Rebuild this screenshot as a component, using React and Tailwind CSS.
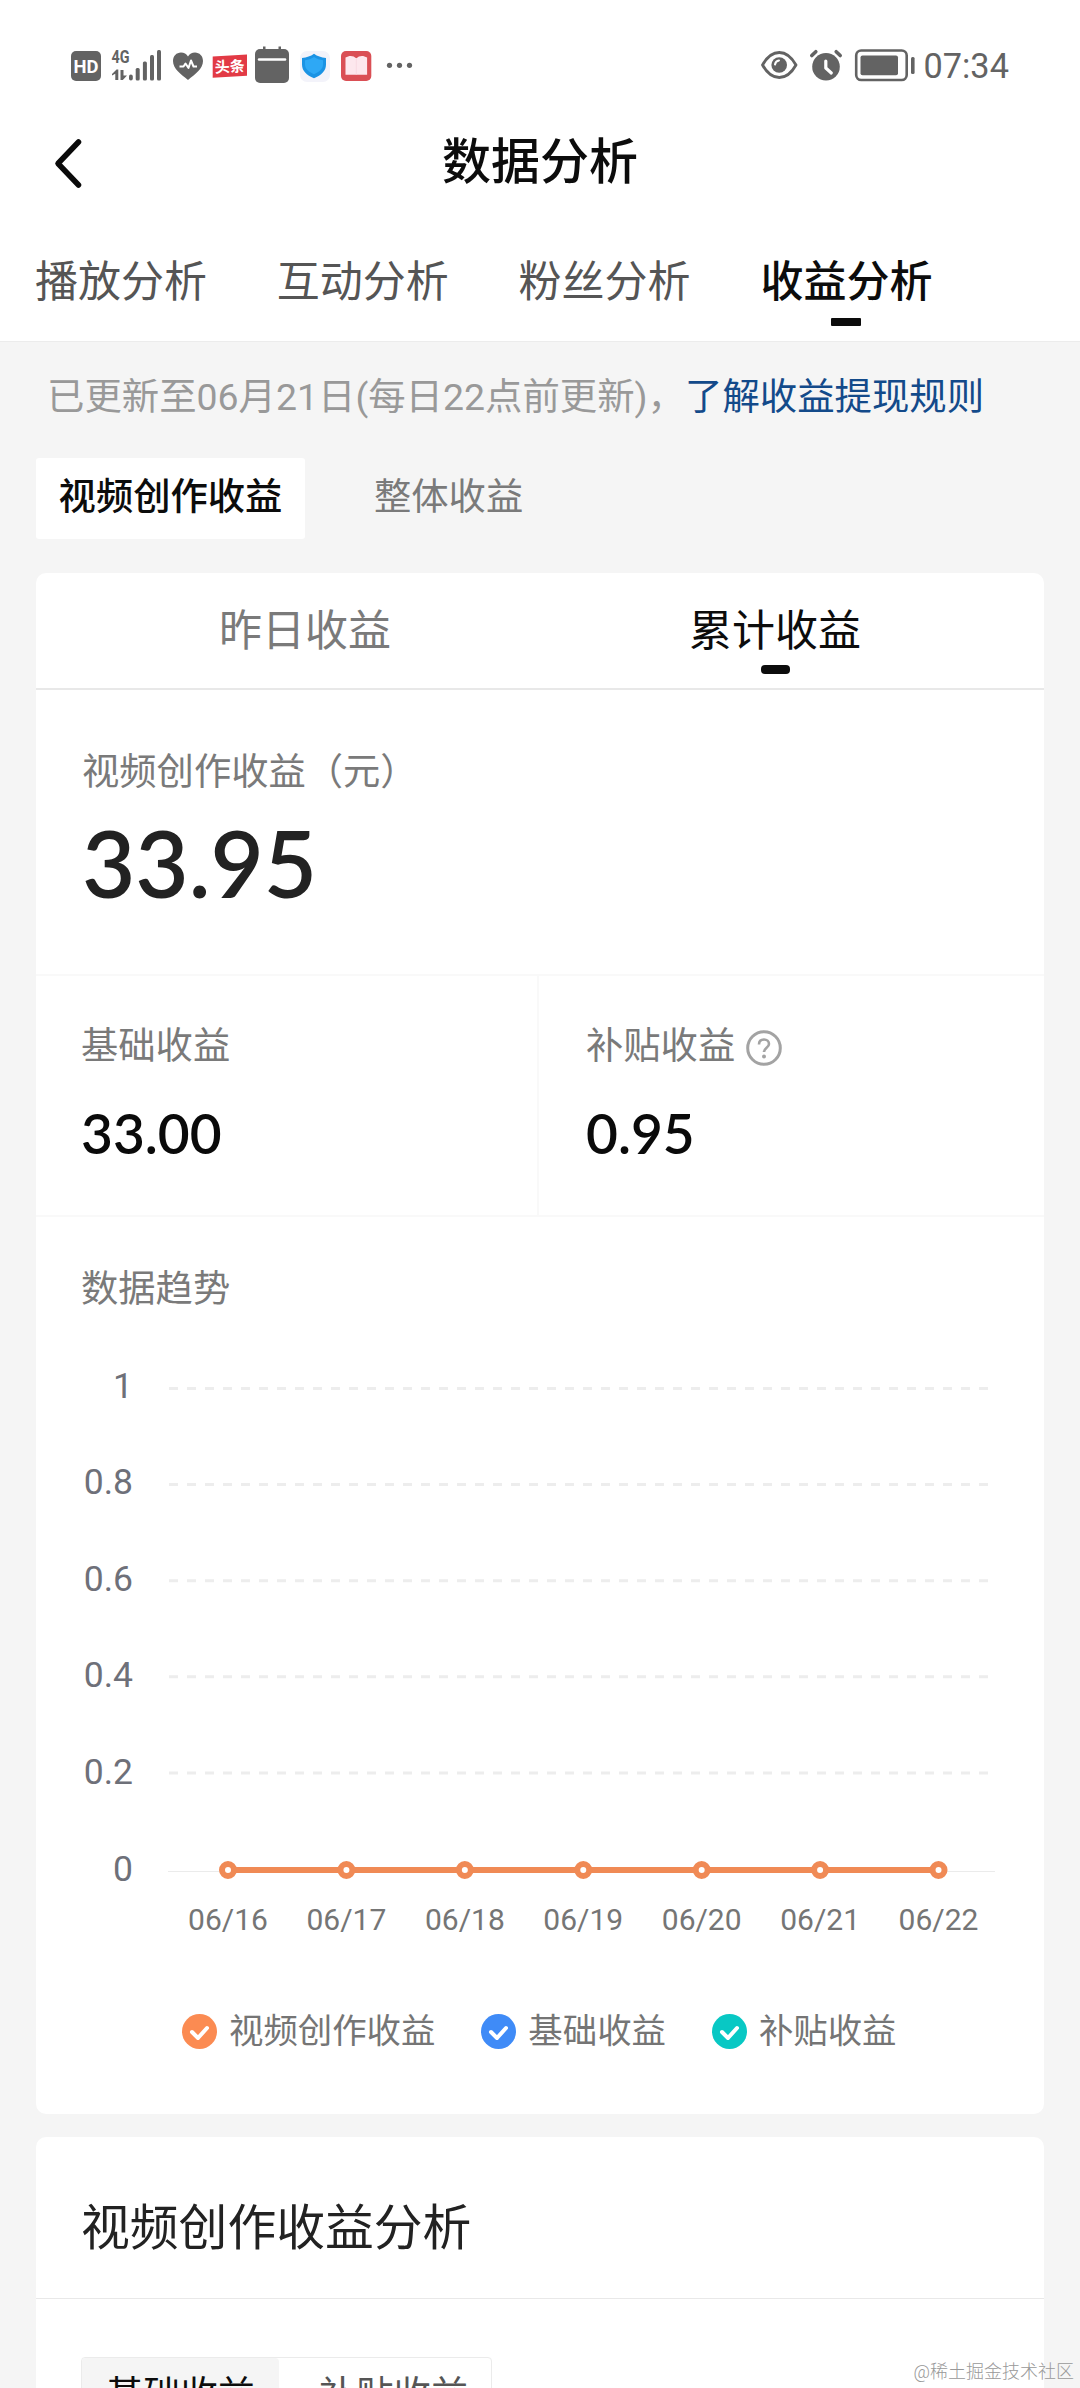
import React from "react";

const tabs = ["播放分析", "互动分析", "粉丝分析", "收益分析"];
const yLabels = ["1", "0.8", "0.6", "0.4", "0.2", "0"];
const dates = ["06/16", "06/17", "06/18", "06/19", "06/20", "06/21", "06/22"];
const legend = [
  { name: "视频创作收益", color: "#fb8b52" },
  { name: "基础收益", color: "#3f8bf7" },
  { name: "补贴收益", color: "#08c8c4" },
];

const StatusBar = () => (
  <div className="h-[112px]">
    <svg width="1080" height="112" viewBox="0 0 1080 112">
      <g fill="#636363">
        <rect x="71" y="51" width="30" height="30" rx="5" />
        <text x="86" y="73" textAnchor="middle" fontSize="19" fontWeight="700" fontFamily="Roboto" fill="#fff" textLength="25" lengthAdjust="spacingAndGlyphs">HD</text>
        <text x="111.500" y="63" fontSize="19" fontWeight="700" fontFamily="Roboto" textLength="18" lengthAdjust="spacingAndGlyphs">4G</text>
        <path d="M112 74l4.500-4.500h1.800V80h-3v-6.300L112 75.500zM120.500 70h3v5.500h3.500l-4.200 4.500h-2.300z" />
        <rect x="129" y="74.500" width="3.800" height="6" rx="1.900" />
        <rect x="135.700" y="68" width="4" height="12.500" rx="1.500" />
        <rect x="142.900" y="61.500" width="4" height="19" rx="1.500" />
        <rect x="150" y="55" width="4" height="25.500" rx="1.500" />
        <rect x="157" y="50" width="4" height="30.500" rx="1.500" />
        <path d="M188 80C181 74 173 69 173 61c0-5 3.500-8.500 8-8.500 3 0 5.500 1.500 7 4 1.500-2.500 4-4 7-4 4.500 0 8 3.500 8 8.500 0 8-8 13-15 19z" />
        <path d="M179.500 66.500h4l2-3 3 4.500 2.500-7.500 2.500 6h3.500" fill="none" stroke="#fff" strokeWidth="2" strokeLinejoin="round" />
      </g>
      <path d="M212.700 56.500l34.300-2v21.300l-34.300 2z" fill="#e23a45" />
      <text x="229.800" y="72" textAnchor="middle" fontSize="15" fontWeight="700" fontFamily="Noto Sans CJK SC" fill="#fff" transform="rotate(-3 229.800 66)">头条</text>
      <g fill="#636363">
        <rect x="255" y="49" width="34" height="34" rx="5" />
        <rect x="263" y="46.500" width="2.500" height="5" />
        <rect x="278.500" y="46.500" width="2.500" height="5" />
      </g>
      <rect x="257.800" y="58.300" width="28.500" height="2.500" rx="1.200" fill="#fff" />
      <rect x="300" y="51" width="30" height="31" rx="7" fill="#f3f3fa" />
      <path d="M314 53.700c3.500 2.500 7 3.700 12 4.300v6.500c0 6.500-4.500 10.500-12 13.800-7.500-3.300-12-7.300-12-13.800V58c5-.600 8.500-1.800 12-4.300z" fill="#1b93e4" />
      <path d="M314 57c3 2 5.500 2.800 9 3.200v4c0 4.800-3.500 7.500-9 10-5.500-2.500-9-5.200-9-10v-4c3.500-.400 6-1.200 9-3.200z" fill="#2ea8f5" />
      <rect x="341" y="51" width="30.300" height="30" rx="5" fill="#da4f55" />
      <path d="M345.500 57.500c4-2.500 8-2 10.800.800 2.800-2.800 6.800-3.300 10.800-.800v17.300h-21.600z" fill="#fde7ed" />
      <path d="M356.300 58.500v16" stroke="#f8dae1" strokeWidth="1" />
      <g fill="#636363">
        <circle cx="389.500" cy="65.300" r="2.600" />
        <circle cx="399.500" cy="65.300" r="2.600" />
        <circle cx="409.500" cy="65.300" r="2.600" />
      </g>

      <path d="M762.500 65c4.500-8 10-12.500 16.800-12.500S791.500 57 796 65c-4.500 8-10 12.500-16.700 12.500S767 73 762.500 65z" fill="none" stroke="#636363" strokeWidth="2.800" strokeLinejoin="round" />
      <circle cx="779.200" cy="65" r="7.800" fill="#636363" />
      <path d="M775 64.500q.5-3.500 4-4" fill="none" stroke="#fff" strokeWidth="2" strokeLinecap="round" />
      <circle cx="826" cy="66.700" r="13.800" fill="#636363" />
      <path d="M811.800 55.500l4-3.800M840.200 55.500l-4-3.800" stroke="#636363" strokeWidth="3.600" strokeLinecap="round" />
      <path d="M825.800 61v7l5.500 5" fill="none" stroke="#fff" strokeWidth="3.200" strokeLinecap="round" strokeLinejoin="round" />
      <rect x="856.200" y="50.500" width="50.500" height="29.500" rx="5" fill="none" stroke="#636363" strokeWidth="2.600" />
      <rect x="860.500" y="55.500" width="37.500" height="19.800" rx="2" fill="#636363" />
      <rect x="911" y="57" width="3.600" height="17" rx="1.500" fill="#636363" />
      <text x="923.500" y="77.700" fontSize="34.300" fontFamily="Roboto" fill="#636363">07:34</text>
    </svg>
  </div>
);

const TrendChart = () => (
  <svg width="1008" height="640" viewBox="36 1320 1008 640" className="block">
    {yLabels.map((label, i) => (
      <g key={label}>
        <text x="133" y={1397.5 + i * 96.600} textAnchor="end" fontSize="35.500" fontFamily="Roboto" fill="#6e7079">
          {label}
        </text>
        {i < 5 && (
          <line x1="169" x2="988" y1={1388.5 + i * 96.100} y2={1388.5 + i * 96.100} stroke="#ededed" strokeWidth="3" strokeDasharray="9 9" />
        )}
      </g>
    ))}
    <line x1="168" x2="995" y1="1871.500" y2="1871.500" stroke="#ebebeb" strokeWidth="1" />
    <line x1="228" x2="938.500" y1="1870" y2="1870" stroke="#f08a55" strokeWidth="6" />
    {dates.map((date, i) => (
      <g key={date}>
        <circle cx={228 + i * 118.420} cy="1870" r="6" fill="#fff" stroke="#f08a55" strokeWidth="6" />
        <text x={228 + i * 118.420} y="1930" textAnchor="middle" fontSize="30" fontFamily="Roboto" fill="#757575">
          {date}
        </text>
      </g>
    ))}
  </svg>
);

const App = () => {
  return (
    <div className="relative w-[1080px] h-[2388px] overflow-hidden bg-[#f5f5f5] font-['Roboto','Noto_Sans_CJK_SC',sans-serif]">
      <header className="h-[342px] bg-white border-b border-[#ececec]">
        <StatusBar />
        <div className="h-[104px] px-[49px] flex items-center justify-between">
          <svg width="40" height="56" viewBox="0 0 40 56" fill="none">
            <path d="M29.500 6L9 27.500L29.500 49" stroke="#0a0a0a" strokeWidth="5.500" strokeLinecap="round" strokeLinejoin="round" />
          </svg>
          <h1 className="text-[49px] leading-none font-medium text-[#0c0c0c] pb-1">数据分析</h1>
          <div className="w-10"></div>
        </div>
        <ul className="flex gap-[69.800px] px-[35px] pt-[38px] text-[43px] leading-[56px] text-[#555]">
          {tabs.map((tab) =>
            tab === "收益分析" ? (
              <li key={tab} className="flex flex-col items-center font-medium text-[#0c0c0c]">
                {tab}
                <span className="mt-[8px] w-[30px] h-[8px] rounded-[1px] bg-[#0c0c0c]"></span>
              </li>
            ) : (
              <li key={tab}>{tab}</li>
            )
          )}
        </ul>
      </header>

      <p className="h-[116px] pl-[47px] pt-[27px] text-[37.400px] leading-[56px] text-[#999] whitespace-nowrap">
        已更新至06月21日(每日22点前更新)，<a href="#" className="text-[#134a8a]">了解收益提现规则</a>
      </p>

      <div className="flex items-center px-9 text-[37.300px] leading-none">
        <button className="w-[269px] h-[81px] pb-[1px] bg-white rounded-[3px] font-medium text-[#0c0c0c]">视频创作收益</button>
        <button className="ml-[69px] pb-[1px] text-[#7a7a7a]">整体收益</button>
      </div>

      <section className="mx-9 mt-[34px] h-[1541px] bg-white rounded-[10px]">
        <div className="flex h-[117px] px-[34px] pt-[30px] border-b-2 border-[#e8e8e8] text-[43px] leading-[56px]">
          <div className="w-1/2 text-center text-[#7a7a7a]">昨日收益</div>
          <div className="w-1/2 flex flex-col items-center text-[#0c0c0c]">
            累计收益
            <span className="mt-[6px] w-[29px] h-[9px] rounded-[4px] bg-[#0c0c0c]"></span>
          </div>
        </div>

        <div className="h-[286px] pl-[46px] pt-[54px] border-b-2 border-[#f9f9f9]">
          <div className="text-[37.300px] leading-[56px] text-[#7a7a7a]">视频创作收益（元）</div>
          <div className="mt-[17px] text-[92px] leading-[92px] font-semibold font-['Lato'] text-[#222]">33.95</div>
        </div>

        <div className="flex h-[241px] border-b-2 border-[#f9f9f9]">
          <div className="w-[503px] pl-[45px] pt-[42px] border-r-2 border-[#f9f9f9]">
            <div className="text-[37.300px] leading-[56px] text-[#7a7a7a]">基础收益</div>
            <div className="mt-[31px] text-[55px] leading-[56px] font-semibold font-['Lato'] text-[#0a0a0a]">33.00</div>
          </div>
          <div className="pl-[47px] pt-[42px]">
            <div className="flex items-center text-[37.300px] leading-[56px] text-[#7a7a7a]">
              补贴收益
              <svg className="ml-[11px] mt-[3px]" width="36" height="36" viewBox="0 0 36 36" fill="none" stroke="#a3a3a3">
                <circle cx="18" cy="18" r="16.300" strokeWidth="3" />
                <path d="M13 14.500c0-3.300 2.200-5 5-5s5 1.800 5 4.500c0 3.800-5 3.800-5 8" strokeWidth="2.600" />
                <circle cx="18" cy="26.500" r="2" fill="#a3a3a3" stroke="none" />
              </svg>
            </div>
            <div className="mt-[31px] text-[55px] leading-[56px] font-semibold font-['Lato'] text-[#0a0a0a]">0.95</div>
          </div>
        </div>

        <div className="h-[103px] pl-[45px] pt-[44px] text-[37.300px] leading-[56px] text-[#7a7a7a]">数据趋势</div>
        <TrendChart />
        <div className="flex gap-[46px] pl-[146px] pt-[43px] text-[34.400px] leading-[56px] text-[#757575]">
          {legend.map((item) => (
            <div key={item.name} className="flex items-center">
              <svg className="mr-[12px]" width="35" height="35" viewBox="0 0 35 35" fill="none">
                <circle cx="17.500" cy="17.500" r="17.500" fill={item.color} />
                <path d="M10 18l6 6 9-10" stroke="#fff" strokeWidth="4" strokeLinecap="round" strokeLinejoin="round" />
              </svg>
              {item.name}
            </div>
          ))}
        </div>
      </section>

      <section className="mx-9 mt-[23px] h-[300px] bg-white rounded-t-[10px]">
        <h2 className="h-[162px] pl-[45px] pt-[62px] border-b border-[#e8e8e8] text-[48.800px] leading-[60px] text-[#222]">视频创作收益分析</h2>
        <div className="ml-[45px] mt-[58px] w-[411px] h-[90px] flex border border-[#ebebeb] rounded-[4px] text-[37.300px] leading-[75px]">
          <div className="w-[197px] text-center bg-[#f5f5f5] rounded-[4px] text-[#0c0c0c]">基础收益</div>
          <div className="flex-1 pl-[40px] text-[#555]">补贴收益</div>
        </div>
      </section>

      <div className="absolute right-[6px] bottom-[4px] text-[18px] leading-6 font-light text-[#999]">@稀土掘金技术社区</div>
    </div>
  );
};

export default App;
